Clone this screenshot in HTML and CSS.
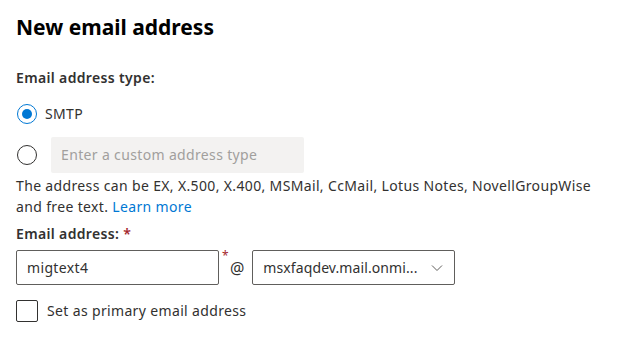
FILE: index.html
```html
<!DOCTYPE html>
<html lang="en">
<head>
    <meta charset="UTF-8">
    <title>New email address</title>
    <link rel="stylesheet" href="styles.css">
</head>
<body>
    <div class="panel">
        <h1>New email address</h1>

        <div class="field-label">Email address type:</div>

        <div class="radio-row">
            <span class="radio checked"></span>
            <span class="radio-text">SMTP</span>
        </div>

        <div class="radio-row custom">
            <span class="radio"></span>
            <div class="text-box filled">
                <span class="placeholder">Enter a custom address type</span>
            </div>
        </div>

        <p class="hint">
            <span class="hint-line">The address can be EX, X.500, X.400, MSMail, CcMail, Lotus Notes, NovellGroupWise</span>
            <span>and free text.</span> <a href="#" class="link">Learn more</a>
        </p>

        <div class="field-label tight">Email address: <span class="req">*</span></div>

        <div class="address-row">
            <div class="text-box outlined">
                <span class="value">migtext4</span>
            </div>
            <span class="req small">*</span>
            <span class="at">@</span>
            <div class="text-box outlined dropdown">
                <span class="value compact">msxfaqdev.mail.onmi...</span>
                <svg class="chevron" width="12" height="12" viewBox="0 0 12 12">
                    <path d="M1 3.5 L6 8.5 L11 3.5" fill="none" stroke="#605e5c" stroke-width="1"/>
                </svg>
            </div>
        </div>

        <label class="check-row">
            <span class="checkbox"></span>
            <span class="check-text">Set as primary email address</span>
        </label>
    </div>
</body>
</html>
```

FILE: styles.css
```css
:root {
    --text-color: #323130;
    --border-color: #605e5c;
    --accent: #0078d4;
    --field-bg: #f3f2f1;
    --placeholder: #a19f9d;
    --required: #a4262c;
}

* {
    margin: 0;
    padding: 0;
    box-sizing: border-box;
}

body {
    font-family: 'Noto Sans', 'Open Sans', sans-serif;
    font-size: 14px;
    line-height: 20px;
    letter-spacing: 0.35px;
    color: var(--text-color);
    background: #ffffff;
}

.panel {
    padding: 13px 16px 0;
}

h1 {
    font-size: 21px;
    line-height: 28px;
    font-weight: 700;
    letter-spacing: 0;
    color: #000000;
    margin-bottom: 27px;
}

.field-label {
    font-weight: 600;
    margin-bottom: 16px;
}

.field-label.tight {
    margin-bottom: 6px;
}

.radio-row {
    display: flex;
    align-items: center;
    gap: 8px;
    height: 20px;
    margin-bottom: 13px;
}

.radio-row.custom {
    height: 36px;
    gap: 14px;
    margin-bottom: 0;
}

.radio {
    width: 20px;
    height: 20px;
    border-radius: 50%;
    border: 1px solid var(--text-color);
    flex-shrink: 0;
    position: relative;
    margin-left: 1px;
}

.radio.checked {
    border-color: var(--accent);
}

.radio.checked::after {
    content: "";
    position: absolute;
    left: 4px;
    top: 4px;
    width: 10px;
    height: 10px;
    border-radius: 50%;
    background: var(--accent);
}

.text-box {
    display: flex;
    align-items: center;
    height: 36px;
    padding: 0 10px;
    border-radius: 2px;
}

.text-box.filled {
    width: 253px;
    background: var(--field-bg);
}

.placeholder {
    color: var(--placeholder);
}

.hint {
    max-width: 590px;
    margin-top: 2px;
    line-height: 21px;
    margin-bottom: 7px;
}

.hint-line {
    display: block;
}

.link {
    color: var(--accent);
    text-decoration: none;
}

.req {
    color: var(--required);
}

.address-row {
    display: flex;
    align-items: center;
    height: 35px;
}

.text-box.outlined {
    width: 203px;
    height: 35px;
    border: 1px solid var(--border-color);
}

.value.compact {
    letter-spacing: 0.1px;
}

.req.small {
    font-size: 12px;
    align-self: flex-start;
    line-height: 12px;
    margin: 0 0 0 3px;
}

.at {
    font-size: 16px;
    letter-spacing: 0;
    margin: 0 8px 0 1px;
}

.dropdown {
    justify-content: space-between;
}

.chevron {
    margin-right: 1px;
}

.check-row {
    display: flex;
    align-items: center;
    gap: 9px;
    margin-top: 15px;
}

.checkbox {
    width: 22px;
    height: 22px;
    border: 1px solid var(--text-color);
    border-radius: 2px;
}
```
